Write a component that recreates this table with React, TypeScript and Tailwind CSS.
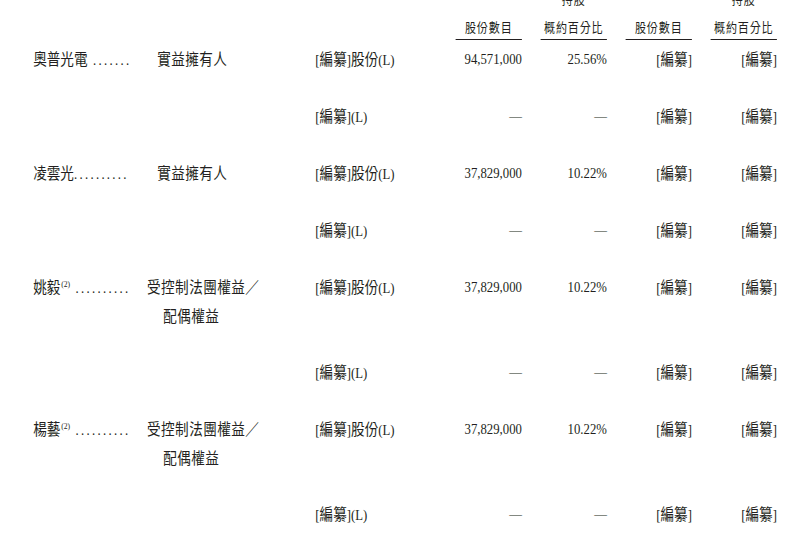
import React from 'react';

// prospectus shareholding table, glyphs condensed by a single horizontal scale on the wrapper
const CJK = /([\u3000-\u9fff\uff00-\uffef]+)/;

function T({ s }: { s: string }) {
  return <>{s.split(CJK).map((p, i) => (i % 2 ? <span key={i} className="text-[16px]">{p}</span> : p))}</>;
}

type Row = { name?: string; sup?: boolean; dots?: string; cap?: string[]; capIndent?: boolean; cls: string; num: string; pct: string };

const rows: Row[] = [
  { name: '奧普光電', dots: ' .......', cap: ['實益擁有人'], capIndent: true, cls: '[編纂]股份(L)', num: '94,571,000', pct: '25.56%' },
  { cls: '[編纂](L)', num: '—', pct: '—' },
  { name: '凌雲光', dots: '..........', cap: ['實益擁有人'], capIndent: true, cls: '[編纂]股份(L)', num: '37,829,000', pct: '10.22%' },
  { cls: '[編纂](L)', num: '—', pct: '—' },
  { name: '姚毅', sup: true, dots: ' ..........', cap: ['受控制法團權益／', '配偶權益'], cls: '[編纂]股份(L)', num: '37,829,000', pct: '10.22%' },
  { cls: '[編纂](L)', num: '—', pct: '—' },
  { name: '楊藝', sup: true, dots: ' ..........', cap: ['受控制法團權益／', '配偶權益'], cls: '[編纂]股份(L)', num: '37,829,000', pct: '10.22%' },
  { cls: '[編纂](L)', num: '—', pct: '—' },
];

const cols = 'grid grid-cols-[332px_165px_78px_100px_100px_100px]';

function Head({ top, label }: { top?: string; label: string }) {
  return (
    <div className="flex flex-col items-end">
      {top && <div className="w-[78px] text-center text-[13px] leading-[20px] tracking-[1px] mb-[8px]">{top}</div>}
      <div className="w-[78px] text-center text-[13px] leading-[20px] tracking-[1px] border-b border-[#231f20] pb-[1px]">{label}</div>
    </div>
  );
}

function L({ children, className = '' }: { children: React.ReactNode; className?: string }) {
  return <div className={`h-[29px] leading-[29px] overflow-visible ${className}`}>{children}</div>;
}

export default function App() {
  return (
    <div className="w-[810px] h-[551px] overflow-hidden bg-white text-[#231f20]">
      <div className="w-[1000px] origin-top-left scale-x-[0.85] pl-[39px] text-[15px] font-['Liberation_Serif','Noto_Sans_CJK_TC',serif]">
        <div className={`${cols} items-end -mt-[10px]`}>
          <div />
          <div />
          <Head label="股份數目" />
          <Head top="持股" label="概約百分比" />
          <Head label="股份數目" />
          <Head top="持股" label="概約百分比" />
        </div>
        <div className="mt-[5px]">
          {rows.map((r, i) => (
            <div key={i} className={`${cols} ${r.cap && r.cap[1] ? 'h-[85px]' : 'h-[57px]'}`}>
              <div className="flex">
                <L className="w-[134px] whitespace-pre">
                  {r.name && <T s={r.name} />}
                  {r.sup && <span className="text-[9px] relative -top-[6px] ml-[1px] leading-none">(2)</span>}
                  {r.dots && <span className="tracking-[2.7px]">{r.dots}</span>}
                </L>
                {r.cap && (
                  <div className={r.capIndent ? 'pl-[12px]' : ''}>
                    <L className="tracking-[0.5px]"><T s={r.cap[0]} /></L>
                    {r.cap[1] && <L className="pl-[19px] tracking-[0.5px]"><T s={r.cap[1]} /></L>}
                  </div>
                )}
              </div>
              <div><L><T s={r.cls} /></L></div>
              <div><L className="text-right">{r.num}</L></div>
              <div><L className="text-right">{r.pct}</L></div>
              <div><L className="text-right"><T s="[編纂]" /></L></div>
              <div><L className="text-right"><T s="[編纂]" /></L></div>
            </div>
          ))}
        </div>
      </div>
    </div>
  );
}
